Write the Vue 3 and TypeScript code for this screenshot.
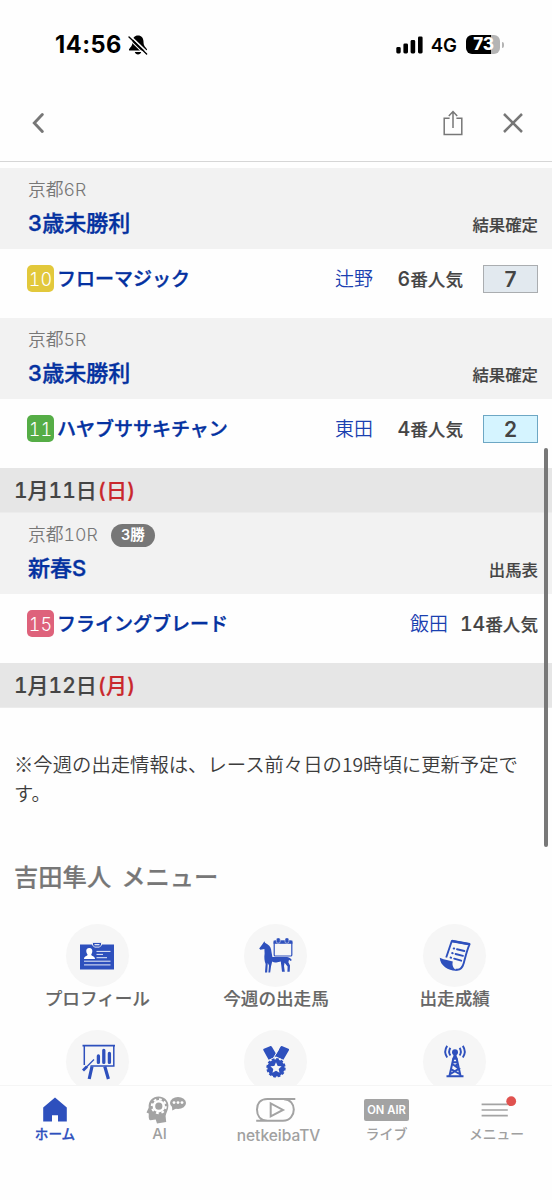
<script setup lang="ts">
interface Race {
  place: string
  grade?: string
  title: string
  status: string
  num: number
  color: string
  horse: string
  jockey: string
  rank: string
  result?: string
  resultClass?: string
}
interface Day {
  label?: string
  weekday?: string
  races: Race[]
}

const days: Day[] = [
  {
    races: [
      { place: '京都6R', title: '3歳未勝利', status: '結果確定', num: 10, color: 'yellow', horse: 'フローマジック', jockey: '辻野', rank: '6', result: '7', resultClass: 'plain' },
      { place: '京都5R', title: '3歳未勝利', status: '結果確定', num: 11, color: 'green', horse: 'ハヤブササキチャン', jockey: '東田', rank: '4', result: '2', resultClass: 'second' },
    ],
  },
  {
    label: '1月11日',
    weekday: '(日)',
    races: [
      { place: '京都10R', grade: '3勝', title: '新春S', status: '出馬表', num: 15, color: 'pink', horse: 'フライングブレード', jockey: '飯田', rank: '14' },
    ],
  },
  { label: '1月12日', weekday: '(月)', races: [] },
]
</script>

<template>
  <div class="screen">
    <div class="status">
      <span class="clock">14:56</span>
      <svg class="bell" width="20" height="20" viewBox="0 0 20 20">
        <path d="M10 0.6C6.5 0.6 4.6 3.2 4.5 6.6C4.4 10.4 3.6 11.5 1.6 13.4C0.5 14.5 0.8 15.6 2.2 15.6H17.8C19.2 15.6 19.5 14.5 18.4 13.4C16.4 11.5 15.6 10.4 15.5 6.6C15.4 3.2 13.5 0.6 10 0.6ZM6.8 16.9H13.2C12.8 18.5 11.6 19.4 10 19.4S7.2 18.5 6.8 16.9Z" fill="#000" />
        <path d="M2.4 1L20 17.9" stroke="#fefefe" stroke-width="1.6" />
        <path d="M1 2L18.6 19" stroke="#000" stroke-width="1.4" stroke-linecap="round" />
        <path d="M0 3.3L17 19.8" stroke="#fefefe" stroke-width="1.1" />
      </svg>
      <svg class="bars" width="28" height="18" viewBox="0 0 28 18">
        <rect x="0.3" y="11" width="4.4" height="6.4" rx="1.4" />
        <rect x="7.4" y="7.4" width="4.6" height="10" rx="1.4" />
        <rect x="14.6" y="4" width="4.6" height="13.4" rx="1.4" />
        <rect x="22" y="0.4" width="4.6" height="17" rx="1.4" />
      </svg>
      <span class="net">4G</span>
      <div class="battery"><span>73</span></div>
      <i class="nub"></i>
    </div>

    <header class="toolbar">
      <svg class="back" width="12" height="22" viewBox="0 0 12 22"><path d="M10.3 2.6L2.3 11L10.3 19.4" fill="none" stroke="#777" stroke-width="2.9" stroke-linecap="round" /></svg>
      <svg class="share" width="20" height="26" viewBox="0 0 20 26"><path d="M6.6 8.2H1.2V24.4H18.8V8.2H13.4M10 18V1.8M5.8 6L10 1.6L14.2 6" fill="none" stroke="#777" stroke-width="1.5" /></svg>
      <svg class="close" width="22" height="22" viewBox="0 0 22 22"><path d="M2 2L20 20M20 2L2 20" stroke="#777" stroke-width="2.5" /></svg>
    </header>

    <main class="content">
      <section v-for="(day, d) in days" :key="d">
        <h2 v-if="day.label" class="date">{{ day.label }}<em>{{ day.weekday }}</em></h2>
        <article v-for="race in day.races" :key="race.place" class="race">
          <div class="head">
            <div>
              <p class="place">{{ race.place }}<span v-if="race.grade" class="grade">{{ race.grade }}</span></p>
              <h3 class="title">{{ race.title }}</h3>
            </div>
            <span class="state">{{ race.status }}</span>
          </div>
          <div class="entry">
            <span class="num" :class="race.color">{{ race.num }}</span>
            <span class="horse">{{ race.horse }}</span>
            <span class="jockey">{{ race.jockey }}</span>
            <span class="pop"><b>{{ race.rank }}</b>番人気</span>
            <span v-if="race.result" class="result" :class="race.resultClass">{{ race.result }}</span>
          </div>
        </article>
      </section>

      <p class="notice">※今週の出走情報は、レース前々日の19時頃に更新予定です。</p>

      <h2 class="menu-title">吉田隼人 メニュー</h2>
      <div class="menu">
        <div class="item">
          <div class="disc">
            <svg width="36" height="36" viewBox="0 1.6 36 36">
              <path fill="#2e50bd" d="M1 8H35V33H1Z" />
              <path fill="#2e50bd" stroke="#f6f6f6" stroke-width="0.9" d="M13.5 6H22.5V8.6L20.5 10.7H15.5L13.5 8.6Z" />
              <path d="M15.5 8.3H20.5" stroke="#fff" stroke-width="1.1" />
              <path fill="#fff" d="M10.3 11.7C12.5 11.7 13.5 13.2 13.3 15.2C13.1 17 12.4 17.7 12.2 18.4C12.4 19.8 16 19.5 16 22.6H5C5 19.5 8.4 19.8 8.6 18.4C8.4 17.7 7.5 17 7.3 15.2C7.1 13.2 8.1 11.7 10.3 11.7Z" />
              <path d="M17.5 15H31.5M17.5 18H24M17.5 21.3H28M5 24.8H31.5M5 28.5H31.5" stroke="#e8ecf8" stroke-width="1" />
            </svg>
          </div>
          <span>プロフィール</span>
        </div>
        <div class="item">
          <div class="disc">
            <svg width="36" height="36" viewBox="0 0.4 36 36">
              <path fill="#2e50bd" d="M6.4 3.6L7 5.2L9.4 6.6C12.4 8.4 13.2 11 13.4 14L14.4 19.5H27C30 19.5 32.4 20 33.8 22.4L32.8 23.4L31 22.2L30.4 24.6L32 28L31.7 34.2H29.4L29.6 29L26.6 25.2L26 28.5L26.8 34.2H24L23.4 29L22.8 24C19.5 25.2 16 25 14.2 23.8L13 29L12.2 35H10.4L11 28L9.8 25.5L9.2 34.8H7L7.6 26.5C6.5 23.7 6 20 6.6 16L6.4 11.4L2.4 12.2L1.2 11L4.2 7Z" />
              <rect x="16.2" y="3.6" width="17.6" height="14.8" rx="1" fill="#f6f6f6" stroke="#2e50bd" stroke-width="1.2" />
              <path d="M15.6 3H34.4V6.2H15.6Z" fill="#2e50bd" />
              <rect x="18.4" y="0.3" width="3.8" height="5.2" rx="1.4" fill="#2e50bd" stroke="#f6f6f6" stroke-width="0.5" />
              <rect x="27" y="0.3" width="3.8" height="5.2" rx="1.4" fill="#2e50bd" stroke="#f6f6f6" stroke-width="0.5" />
            </svg>
          </div>
          <span>今週の出走馬</span>
        </div>
        <div class="item">
          <div class="disc">
            <svg width="36" height="36" viewBox="0 1 36 36">
              <path fill="none" stroke="#2e50bd" stroke-width="1.9" stroke-linejoin="round" d="M9.2 20.5L14.8 4L32.6 7.2C29.7 14 28.4 20 26.8 26C25.4 31 22.2 33.5 18.5 32.6" />
              <path d="M14.8 4L32.8 7.2" stroke="#2e50bd" stroke-width="2.4" />
              <path fill="#2e50bd" d="M2.8 20.8C8 23.2 12 23.4 15.8 24.6C14.8 28.4 16.2 32 20.4 33.6C13 34.5 3 29.5 2.8 20.8Z" />
              <path d="M20 12.3L27.4 14M18.6 17L26 18.8M17.2 21.6L24.2 23.7" stroke="#2e50bd" stroke-width="1.9" stroke-linecap="round" />
              <path d="M16.7 11.5L17.2 11.6M15.2 16.1L15.7 16.2M13.6 20.6L14.1 20.7" stroke="#2e50bd" stroke-width="2" stroke-linecap="round" />
            </svg>
          </div>
          <span>出走成績</span>
        </div>
        <div class="item">
          <div class="disc">
            <svg width="36" height="36" viewBox="0 1 36 36">
              <path d="M3.5 2.6H36" stroke="#2e50bd" stroke-width="1.8" />
              <path d="M5.3 2.5V22M34.8 2.5V22.9H11.5" stroke="#2e50bd" stroke-width="1.5" fill="none" />
              <path d="M19.4 13V19.4M24.8 7.3V19.4M30.4 10.5V19.4" stroke="#2e50bd" stroke-width="3.3" stroke-linecap="round" />
              <path d="M4 27.4L8 23.4" stroke="#2e50bd" stroke-width="2.8" />
              <path d="M7 24.5L15 16.5" stroke="#2e50bd" stroke-width="1.3" />
              <path d="M13 23.5L10.2 36M25.8 23.5L29.4 36" stroke="#2e50bd" stroke-width="3.2" />
            </svg>
          </div>
        </div>
        <div class="item">
          <div class="disc">
            <svg width="36" height="36" viewBox="0 0.6 36 36">
              <path fill="#2e50bd" d="M5.9 5.4L12 2.8C13 2.5 13.5 2.8 14 3.7L18.2 10.6L22.4 3.7C22.9 2.8 23.4 2.5 24.4 2.8L30.4 5.4C31.2 5.8 31.2 6.5 30.8 7.2L25.4 16.4L18 13L10.6 16.4L5.5 7.2C5.1 6.5 5.1 5.8 5.9 5.4Z" />
              <path d="M14.4 16.4L20.8 5.6" stroke="#f6f6f6" stroke-width="1" />
              <circle cx="18" cy="24.4" r="10.2" fill="#f6f6f6" />
              <circle cx="18" cy="24.4" r="8.6" fill="#2e50bd" />
              <circle cx="18" cy="24.4" r="8.8" fill="none" stroke="#2e50bd" stroke-width="1.8" stroke-dasharray="2.8 1.8" />
              <path fill="#f6f6f6" d="M18 18.8L19.7 22.5L23.6 22.9L20.7 25.5L21.5 29.3L18 27.3L14.5 29.3L15.3 25.5L12.4 22.9L16.3 22.5Z" />
            </svg>
          </div>
        </div>
        <div class="item">
          <div class="disc">
            <svg width="36" height="36" viewBox="0 1.3 36 36">
              <g fill="none" stroke="#2e50bd" stroke-width="1.9">
                <path d="M10.2 3.2C7.6 7 7.6 11 10.2 14.8M13.4 5.2C11.8 7.6 11.8 10.4 13.4 12.8M25.8 3.2C28.4 7 28.4 11 25.8 14.8M22.6 5.2C24.2 7.6 24.2 10.4 22.6 12.8" />
                <path d="M16.5 15L12.4 33.5M19.5 15L23.6 33.5M15.3 19.6H20.7M15 21L22 26L13.4 31.3M21 21L17.5 23.8M14 26.5L22.6 31.3" stroke-width="2" />
              </g>
              <circle cx="18" cy="9.5" r="3" fill="#2e50bd" />
              <path d="M16.8 11H19.2L20.6 17H15.4ZM9.5 32.6H26.5V34.6H9.5Z" fill="#2e50bd" />
            </svg>
          </div>
        </div>
      </div>
    </main>

    <nav class="tabs">
      <div class="tab home">
        <svg width="26" height="28" viewBox="0 0 26 28"><path d="M13 1.6L24.8 11.6V25.4H16V19.2H10V25.4H1.2V11.6Z" fill="#2e50bd" /></svg>
        <span>ホーム</span>
      </div>
      <div class="tab ai">
        <svg width="42" height="28" viewBox="0 0 42 28">
          <path fill="#a3a3a3" d="M12.5 0.4C18 0.4 22.4 4.3 22.4 9.4C22.4 14 20 16.8 19.6 20L20.2 26L11 27.6L9.7 23.6L4.5 24.2C3.2 24.3 2.8 22.7 2.7 20.8L2.8 17.5L0.5 16.4L2.7 11.8C2 4.3 7 0.4 12.5 0.4Z" />
          <circle cx="12.8" cy="10.2" r="7" fill="none" stroke="#fff" stroke-width="2" stroke-dasharray="2.75 2.75" />
          <circle cx="12.8" cy="10.2" r="4.9" fill="none" stroke="#fff" stroke-width="2.6" />
          <ellipse cx="32" cy="6.9" rx="8" ry="6" fill="#a3a3a3" />
          <path d="M26 10L26.3 14.6L31 12Z" fill="#a3a3a3" />
          <circle cx="28" cy="6.6" r="1.4" fill="#fff" /><circle cx="32" cy="6.6" r="1.4" fill="#fff" /><circle cx="36" cy="6.6" r="1.4" fill="#fff" />
        </svg>
        <span>AI</span>
      </div>
      <div class="tab tv">
        <svg width="42" height="28" viewBox="0 0 42 28">
          <path d="M40.3 3H12.4C4.8 3 2 8 2 13.5C2 19 4.8 24.7 12.4 24.7M1.2 24.7H28C35.2 24.7 38.8 19 38.8 13.5C38.8 8 35.2 3.3 29 3.3" fill="none" stroke="#a3a3a3" stroke-width="2" />
          <path d="M15.7 7.4V20.4L28 13.9Z" fill="none" stroke="#a3a3a3" stroke-width="2" />
        </svg>
        <span>netkeibaTV</span>
      </div>
      <div class="tab live">
        <div class="onair">ON AIR</div>
        <span>ライブ</span>
      </div>
      <div class="tab more">
        <svg width="38" height="28" viewBox="0 0 38 28">
          <path d="M3.6 8.3H29.8M3.6 14H29.8M3.6 19.6H29.8" stroke="#a3a3a3" stroke-width="1.7" />
          <circle cx="33.2" cy="5.2" r="4.9" fill="#e0524f" />
        </svg>
        <span>メニュー</span>
      </div>
    </nav>
    <i class="scroll"></i>
  </div>
</template>

<style>
body { background: #fefefe; }
</style>

<style scoped>
* { box-sizing: border-box; margin: 0; padding: 0; }
.screen {
  position: relative;
  width: 552px;
  height: 1200px;
  display: flex;
  flex-direction: column;
  overflow: hidden;
  background: #fefefe;
  color: #444;
  font-family: Inter, "Noto Sans CJK JP", sans-serif;
  font-variant-numeric: tabular-nums;
}
.status { height: 85px; flex: none; display: flex; align-items: center; padding: 4px 48px 0 55px; color: #000; }
.clock { width: 73px; font-size: 23.6px; font-weight: 700; letter-spacing: 0.5px; white-space: nowrap; font-variant-numeric: normal; }
.bars { margin-left: 248px; }
.net { width: 35px; margin-left: 7px; font-size: 18.6px; font-weight: 600; }
.battery {
  width: 34px; height: 19px; border-radius: 6px; text-align: center;
  background: linear-gradient(to right, #000 25px, #b4b4b4 25px);
  color: #fff; font-size: 17px; line-height: 19px; font-weight: 800; letter-spacing: -0.8px;
}
.nub { width: 2px; height: 6px; margin-left: 2px; border-radius: 0 2px 2px 0; background: #b4b4b4; }
.toolbar { height: 77px; flex: none; display: flex; align-items: center; padding: 0 28px 0 32px; border-bottom: 1px solid #d6d6d6; }
.share { margin-left: auto; }
.close { margin-left: 39px; }

.content { flex: 1; min-height: 0; overflow: hidden; padding-top: 6px; }
.date { height: 45px; padding-left: 14px; background: #e6e6e6; border-bottom: 1px solid #ececec; font-size: 21px; line-height: 45px; font-weight: 500; color: #444; -webkit-text-stroke: 0.2px; }
.date em { font-style: normal; color: #c9282d; margin-left: 1px; }
.head { height: 81px; display: flex; justify-content: space-between; align-items: flex-end; padding: 0 14px 0 28px; background: #f2f2f2; }
.place { height: 28px; display: flex; align-items: center; font-size: 17.8px; line-height: 28px; font-weight: 350; color: #777; }
.grade { width: 44px; height: 23px; margin-left: 13px; border-radius: 12px; background: #777; color: #fff; font-size: 14.5px; line-height: 22px; font-weight: 600; text-align: center; }
.title { height: 45px; font-size: 22px; line-height: 38px; font-weight: 500; color: #0431a0; -webkit-text-stroke: 0.4px; }
.state { font-size: 16.4px; line-height: 24px; font-weight: 500; margin-bottom: 12px; -webkit-text-stroke: 0.15px; }
.entry { height: 69px; display: flex; align-items: flex-start; padding: 16px 14px 0 27px; line-height: 30px; }
.num { width: 27px; height: 27px; border-radius: 5px; color: #fff; text-align: center; font-size: 18px; line-height: 29px; font-weight: 300; }
.yellow { background: #e2c83b; }
.green { background: #55ad46; }
.pink { background: #de627b; }
.horse { margin-left: 3px; font-size: 19px; font-weight: 500; color: #0431a0; -webkit-text-stroke: 0.4px; }
.jockey { margin-left: auto; margin-right: 11px; font-size: 19px; font-weight: 350; color: #1a40b0; }
.pop { width: 79px; text-align: right; font-size: 17.6px; line-height: 28px; font-weight: 500; white-space: nowrap; -webkit-text-stroke: 0.15px; }
.pop b { font-weight: 500; font-size: 19.5px; }
.result { width: 55px; height: 28px; margin-left: 20px; border: 1.5px solid #aaa; text-align: center; font-size: 21px; line-height: 27px; font-weight: 600; }
.plain { background: #e2e9ef; border-color: #aaadb0; }
.second { background: #d5f4ff; border-color: #6da7c4; }

.notice { margin: 42px 14px 0; font-family: "Noto Sans CJK JP", sans-serif; font-size: 19.35px; line-height: 29px; font-weight: 350; color: #3c3c3c; word-break: break-all; }
.menu-title { margin: 51px 14px 0; font-size: 24.3px; line-height: 36px; font-weight: 500; word-spacing: 3.5px; color: #777; -webkit-text-stroke: 0.2px; }
.menu { display: grid; grid-template-columns: repeat(3, 1fr); padding: 0 8px; margin-top: 29px; }
.item { height: 106px; display: flex; flex-direction: column; align-items: center; font-size: 17.6px; line-height: 24px; font-weight: 500; color: #666; -webkit-text-stroke: 0.15px; }
.disc { width: 63px; height: 63px; flex: none; display: flex; align-items: center; justify-content: center; border-radius: 50%; background: #f6f6f6; }
.disc svg { overflow: visible; }

.tabs { height: 115px; flex: none; display: grid; grid-template-columns: 110px 99px 139px 77px 127px; padding-top: 10px; background: #fefefe; border-top: 1px solid #f5f5f5; color: #a0a0a0; }
.tab { display: flex; flex-direction: column; align-items: center; height: 60px; font-size: 14px; line-height: 20px; }
.tab span { margin-top: 0; font-weight: 500; }
.tab svg { flex: none; overflow: visible; }
.home { color: #2e50bd; }
.home span { -webkit-text-stroke: 0.3px; font-size: 13.6px; }
.ai { font-size: 15px; }
.ai svg { margin-left: 14px; }
.tv { font-size: 15.5px; }
.tv svg { margin-right: 5px; }
.tv span { margin-top: 2px; }
.more { padding-left: 16px; }
.more span { font-size: 13.8px; }
.onair { width: 45px; height: 22px; margin: 3px 0; border-radius: 2px; background: #a3a3a3; color: #fff; font-size: 11.2px; line-height: 23px; font-weight: 600; text-align: center; white-space: nowrap; }
.scroll { position: absolute; left: 544px; top: 448px; width: 4px; height: 399px; border-radius: 2px; background: #787878; }
</style>
